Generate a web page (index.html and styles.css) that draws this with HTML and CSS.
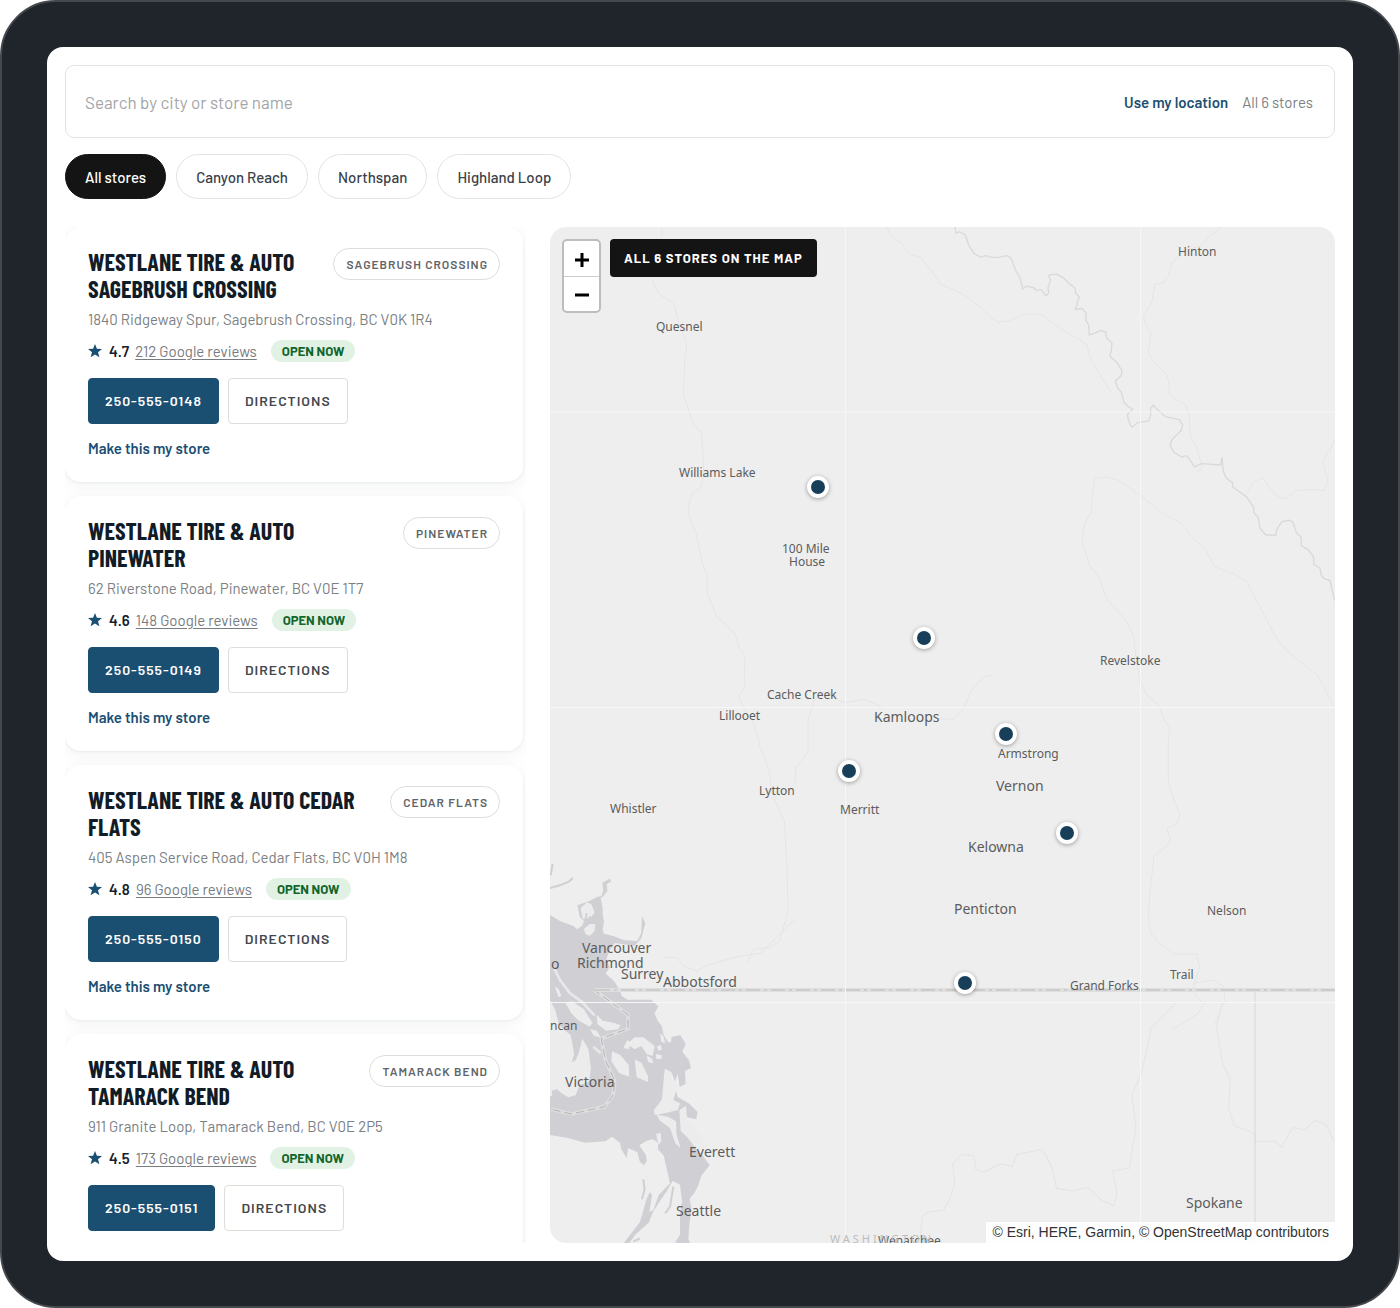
FILE: index.html
```html
<!DOCTYPE html>
<html lang="en">
<head>
<meta charset="utf-8">
<meta name="viewport" content="width=device-width, initial-scale=1">
<title>Westlane Tire &amp; Auto stores</title>
<link rel="stylesheet" href="styles.css">
</head>
<body>
<div class="device">
<main class="screen">
  <form class="search">
    <input class="search-input" type="search" aria-label="Search stores" placeholder="Search by city or store name">
    <button class="locate" type="button">Use my location</button>
    <span class="count">All 6 stores</span>
  </form>

  <div class="chips">
    <button class="chip chip-active" type="button">All stores</button>
    <button class="chip" type="button">Canyon Reach</button>
    <button class="chip" type="button">Northspan</button>
    <button class="chip" type="button">Highland Loop</button>
  </div>

  <div class="finder">
    <section class="list" aria-label="Stores">
      <article class="card">
        <header class="card-head">
          <h2 class="card-title">Westlane Tire &amp; Auto Sagebrush Crossing</h2>
          <span class="tag">Sagebrush Crossing</span>
        </header>
        <p class="address">1840 Ridgeway Spur, Sagebrush Crossing, BC V0K 1R4</p>
        <div class="rating">
          <svg class="star" viewBox="0 0 14 14" aria-hidden="true"><path d="M7 0l1.900 4.800 5.100.3-4 3.200 1.400 5L7 10.600l-4.400 2.700 1.400-5-4-3.200 5.100-.3z"/></svg>
          <strong class="score">4.7</strong>
          <a class="reviews" href="#">212 Google reviews</a>
          <span class="open">Open now</span>
        </div>
        <div class="actions">
          <a class="btn btn-call" href="tel:250-555-0148">250-555-0148</a>
          <a class="btn btn-line" href="#">Directions</a>
        </div>
        <button class="mine" type="button">Make this my store</button>
      </article>

      <article class="card">
        <header class="card-head">
          <h2 class="card-title">Westlane Tire &amp; Auto Pinewater</h2>
          <span class="tag">Pinewater</span>
        </header>
        <p class="address">62 Riverstone Road, Pinewater, BC V0E 1T7</p>
        <div class="rating">
          <svg class="star" viewBox="0 0 14 14" aria-hidden="true"><path d="M7 0l1.900 4.800 5.100.3-4 3.200 1.400 5L7 10.600l-4.400 2.700 1.400-5-4-3.200 5.100-.3z"/></svg>
          <strong class="score">4.6</strong>
          <a class="reviews" href="#">148 Google reviews</a>
          <span class="open">Open now</span>
        </div>
        <div class="actions">
          <a class="btn btn-call" href="tel:250-555-0149">250-555-0149</a>
          <a class="btn btn-line" href="#">Directions</a>
        </div>
        <button class="mine" type="button">Make this my store</button>
      </article>

      <article class="card">
        <header class="card-head">
          <h2 class="card-title">Westlane Tire &amp; Auto Cedar Flats</h2>
          <span class="tag">Cedar Flats</span>
        </header>
        <p class="address">405 Aspen Service Road, Cedar Flats, BC V0H 1M8</p>
        <div class="rating">
          <svg class="star" viewBox="0 0 14 14" aria-hidden="true"><path d="M7 0l1.900 4.800 5.100.3-4 3.200 1.400 5L7 10.600l-4.400 2.700 1.400-5-4-3.200 5.100-.3z"/></svg>
          <strong class="score">4.8</strong>
          <a class="reviews" href="#">96 Google reviews</a>
          <span class="open">Open now</span>
        </div>
        <div class="actions">
          <a class="btn btn-call" href="tel:250-555-0150">250-555-0150</a>
          <a class="btn btn-line" href="#">Directions</a>
        </div>
        <button class="mine" type="button">Make this my store</button>
      </article>

      <article class="card">
        <header class="card-head">
          <h2 class="card-title">Westlane Tire &amp; Auto Tamarack Bend</h2>
          <span class="tag">Tamarack Bend</span>
        </header>
        <p class="address">911 Granite Loop, Tamarack Bend, BC V0E 2P5</p>
        <div class="rating">
          <svg class="star" viewBox="0 0 14 14" aria-hidden="true"><path d="M7 0l1.900 4.800 5.100.3-4 3.200 1.400 5L7 10.600l-4.400 2.700 1.400-5-4-3.200 5.100-.3z"/></svg>
          <strong class="score">4.5</strong>
          <a class="reviews" href="#">173 Google reviews</a>
          <span class="open">Open now</span>
        </div>
        <div class="actions">
          <a class="btn btn-call" href="tel:250-555-0151">250-555-0151</a>
          <a class="btn btn-line" href="#">Directions</a>
        </div>
      </article>
    </section>

    <section class="map" aria-label="Store map">
      <svg class="basemap" viewBox="550 227 785 1016" preserveAspectRatio="xMidYMid slice">
        <!-- rivers and roads -->
        <g class="river">
          <g transform="translate(540 220) scale(.3333)">
            <path d="M366 20v30M337 180l10 25 15 22 30 15 12 15 8 35 10 35 15 30 3 25-5 30-3 70-2 45 10 25 12 35 12 30 20 20 5 60 2 70-8 35-20 12-15 30-2 45 12 25 10 25 10 45 10 50 14 30 0 55 10 25 20 50 15 10 18 18 20 20 12 40 18 26-2 70 4 20-20 30 15 40 28 40 15 50 4 20 14 35 16 50 8 60 22 50 14 30 3 50 5 80 3 130-5 30-20 70-30 20-50 6-15 40"/>
            <path d="M1040 20l12 26 30 22 30 35 30 10 30 35 30 45 34 14 40 20 50 38 30 30 20 12 30-4 45-20 54 0 40 32 40 25 55 32 10 40 40 70 25 35"/>
          </g>
          <g transform="translate(940 220) scale(.3333)">
            <path d="M845 22l-40 30-15 22-60 20-20 20-15 15-10 40-15 20-25 5-10 55-25 40 5 20 18 30-8 60 20 30 35 35 6 20 2 35 10 15 40 20 10 30 2 60 20 40 18 60-20 14"/>
            <path d="M920 820l20-32 28-16 20 30 25 28 25 6 30-24 50-4 35 4 10-30-15-60 25-38 10-20 22-30M465 775l35-4 35 10 70 48 60 50 60 32 30 40 40 35 30 55 60 22 35 20 30 60 30 55 25 50 30 40 50 40 50 40 45 90M465 775l-7 50-4 50-20 35-8 50 12 40 10 35 30 40 22 60 60 70 20 40 10 80 10 60 20 40 40 35 10 35 20 30-5 30 0 130 15 50 20 50-10 28-30 12 12 35-15 22-35 25-5 50-8 70-4 60 6 50 25 30 45 35h70l8 40-10 30-12 40 15 20 20 20-20 30-80 50"/>
            <path d="M0 1497h42l30-32 20-50 40-45 24-5M760 2290l60-10 30 20 5 40-30 70"/>
          </g>
          <path d="M814 700l10-8 20 11 20-4 20 9M814 700l-6 20 0 32-12 15-1 16"/>
          <path d="M665 957l12 1 8 9 12 4 11-6 28-8 25-4 20-20 14-14"/>
          <g transform="translate(780 1000) scale(.395)">
            <path d="M1000 10l-60 60-12 60-15 60-22 50 10 80-16 105-42 8 10 60-8 28-30-14-35-32-40 8-40-6-10-50-20-40-10-8-60 12-12 30-30-6-40 20-22-6-5-34-30-4-24 24 6 50-14 40-14 26-40 6-15 12-5 60-20 40-6 40"/>
            <path d="M1120 8l-15 60 15 90 20 45-4 70 14 45 50 20 4 20 50 0 16 15 28-50 30 6 24-24 30 10 22 45"/>
          </g>
        </g>
        <path class="divide" transform="translate(940 220) scale(.3333)" d="M44 20l4 20 10-5 18 10 10 30 16 25 20 12 14-5 20 5 20 0 24-5 12 6 8 20 8 20 12 20 8 34 10-8 22 4 10 8 14-2 14 18 8-8-2-16 8-22-6-14 10-4 16 0 20 12 16 16 18 14 0 14 12 12-6 18-6 20 20-4 12 14 0 22 8 14 2 30 14-4 20-10 16 6 2 18 16 14-2 22-4 18 22 20 14 24-2 14-18 16 8 22 10 12 8 30 14 14 12 6-16 18 8 30 6 6 20-14 30-4 6-18 0-20 8-10 8 10 30 26 40 8 10 16-4 16-28 28-6 16 12 22 24 14 14-4 12 16 12 18 22-10 56 4 4-22 4 40 8 20 20 16 0 12 40 28 22 30 2 20 12 12 6 34 18 20h30l2-16 16-24 22-4 10 4 12 34 14 14 0 24 20 12 16 20 2 24 18 12 4 22 10 10 16 4 14 60"/>

        <!-- coast; land and water are drawn at three times map scale -->
        <g transform="translate(540 860) scale(.3333)">
          <path class="water" d="M30 165l30 18 40 15 12 10 15-12 5-12-12-12-5-22-3-14 38-14 20-10 15-5 5-15-3-24 23-12 4 8-14 9 2 20-12 15-8 7 6 28 0 20 4 22-4 24 4 12 30 8 30 12 40 2 12-25 2-50 10 22-12 45-20 22-60-8-15 22-10 26 10 24-12 20 25 22 16 24 8 22 17 10h70l22 20-12 22 12 24 10 12 6 28 14 22 8 0 2-16 26-6 16 26-10 24 20 26 6 24-18 8 2 38-18 10-6-40-10 30 10 40 35 20 25 25-4 22-26-6-16-14-5 24 12 24 26 18 5 32 30 40 14 20-24 30-10 30-10 20-16 20 6 30-6 40-4 50 14 35 10 40h-35l-8-55-20-10 14-22 0-60 6-40-6-50-22-12-18 32-14 20-26 40-14 34-40 36-24 34-34 53h-8l30-60 50-65 20-70 10-20 6 10-8 50 12-6 16-44 34-36-14-62-4-20-18-20 0-20-16-10-18 4-22 14 20 30 2 18-8 12-12-10-8-30-28-12-4 30-16-26-4-20-24-18-20 14-62 4-50-14-60-10z"/>
          <path class="land" d="M30 420l16 30 12 46 34 30 8 40 5 40 12-30 10-40 18 30 8 60-6 40-28 8-12 32-22 6-20-12-14-12-16 4 2 14-7 4zM132 206l18-14 16 0-2 20-14 16-14-6zM122 145l18-18 14 6 10 24-14 20-22 0zM76 428l20-4 36 24 26 42-10 10-34-20-20-20zM150 508l20 4 12 20-20-4zM170 464l18 18 34 6 20 8-8 12-36 4-26-20zM44 380l12 6 8 22-8 4zM216 574l24 10 26 30 2 36-30-10-24-36zM262 552l22-20 26 0 34 26-6 30-18-6-16-24-20 10zM284 598l20 10 20 40 0 18-34-14zM320 586l16 10 4 14-16-4zM348 582l18 4-2 12-16-2zM374 626l20 10 18 44-12 40 20 10-6 20-34 8-36 8-2-16 24-32zM350 764l34 6 24 14 2 40 12 40-16-14-16-46-30-22zM418 750l20-12 4 40 50 64 10 20-30 10-30-40-20-20zM348 822l14-4 2 24-8 14zM262 540l12 8-8 20-16-4zM350 560l12-6 4 14-10 4zM360 520l10 8 6 22-12-4z"/>
          <path class="shore" d="M40 320l20 40 30 40 34 24 40 42M160 560l22 20"/>
          <path class="inlet" d="M30 84l30-8 28-12 10-10M38 12l-6 34M118 545l-6 25-14 35M140 160l-4 24 18-14M400 980l-10 60-14 20M310 958l4 30-8 30M300 1135l-20 10"/>
          <path class="lane" d="M160 388l104 76v42l-80 30 12 64 28 62-4 42-26 36-100 22-60-14"/>
          <path class="lane-dash" d="M160 388l104 76v42l-80 30 12 64 28 62-4 42-26 36-100 22-60-14"/>
        </g>
        <path class="border-halo" d="M596 990H1335"/>
        <path class="border" d="M596 990H1335"/>
        <path class="state" d="M1255 990V1243"/>
        <path class="seam" d="M845.500 227V1243M1140.500 227V1243M550 412H1335M550 707.500H1335M550 1002.500H1335"/>

        <g class="town">
          <text x="1178" y="256">Hinton</text>
          <text x="656" y="331">Quesnel</text>
          <text x="679" y="477">Williams Lake</text>
          <text x="782" y="553">100 Mile</text>
          <text x="789" y="566">House</text>
          <text x="1100" y="665">Revelstoke</text>
          <text x="767" y="699">Cache Creek</text>
          <text x="719" y="720">Lillooet</text>
          <text x="998" y="758">Armstrong</text>
          <text x="759" y="795">Lytton</text>
          <text x="610" y="813">Whistler</text>
          <text x="840" y="814">Merritt</text>
          <text x="1207" y="915">Nelson</text>
          <text x="1170" y="979">Trail</text>
          <text x="1070" y="990">Grand Forks</text>
          <text x="550" y="1030">ncan</text>
          <text x="878" y="1245">Wenatchee</text>
        </g>
        <g class="city">
          <text x="874" y="722">Kamloops</text>
          <text x="996" y="791">Vernon</text>
          <text x="968" y="852">Kelowna</text>
          <text x="954" y="914">Penticton</text>
          <text x="582" y="953">Vancouver</text>
          <text x="621" y="979">Surrey</text>
          <text x="577" y="968">Richmond</text>
          <text x="663" y="987">Abbotsford</text>
          <text x="551" y="969">o</text>
          <text x="565" y="1087">Victoria</text>
          <text x="689" y="1157">Everett</text>
          <text x="676" y="1216">Seattle</text>
          <text x="1186" y="1208">Spokane</text>
        </g>
        <text class="region" x="830" y="1243">WASHINGTON</text>
      </svg>

      <button class="pin" type="button" aria-label="Store 1" style="left:34.1%;top:25.6%"></button>
      <button class="pin" type="button" aria-label="Store 2" style="left:47.6%;top:40.5%"></button>
      <button class="pin" type="button" aria-label="Store 3" style="left:58.1%;top:49.9%"></button>
      <button class="pin" type="button" aria-label="Store 4" style="left:38.1%;top:53.5%"></button>
      <button class="pin" type="button" aria-label="Store 5" style="left:65.8%;top:59.6%"></button>
      <button class="pin" type="button" aria-label="Store 6" style="left:52.9%;top:74.4%"></button>

      <div class="map-top">
        <div class="zoom">
          <button class="zoom-btn" type="button" aria-label="Zoom in"><svg viewBox="0 0 16 16"><path d="M8 1v14M1 8h14"/></svg></button>
          <button class="zoom-btn" type="button" aria-label="Zoom out"><svg viewBox="0 0 16 16"><path d="M1 8h14"/></svg></button>
        </div>
        <div class="banner">All 6 stores on the map</div>
      </div>
      <div class="credit">© Esri, HERE, Garmin, © OpenStreetMap contributors</div>
    </section>
  </div>
</main>
</div>
</body>
</html>
```
FILE: styles.css
```css
* { box-sizing: border-box; }

body {
  margin: 0;
  background: #fff;
  color: #14202b;
  font-family: "Barlow", Roboto, "Liberation Sans", sans-serif;
  font-size: 15px;
}

button, input { font: inherit; color: inherit; }
button { cursor: pointer; }

.device {
  height: 100vh;
  padding: 45px;
  border: 2px solid #44484d;
  border-radius: 56px;
  background: #20242b;
}

.screen {
  display: flex;
  flex-direction: column;
  height: 100%;
  padding: 18px;
  border-radius: 16px;
  background: #fff;
}

/* search */
.search {
  display: flex;
  align-items: center;
  gap: 14px;
  padding: 0 21px 0 19px;
  border: 1px solid #e3e3e0;
  border-radius: 9px;
}
.search-input {
  flex: 1;
  min-width: 0;
  height: 71px;
  padding: 0;
  border: 0;
  outline: 0;
  background: none;
  font-size: 17px;
}
.search-input::placeholder { color: #a2a5a7; opacity: 1; }
.locate {
  padding: 0;
  border: 0;
  background: none;
  color: #1b4f72;
  font-weight: 600;
}
.count { color: #7b8083; }

/* region chips */
.chips { display: flex; flex-wrap: wrap; gap: 10px; margin: 16px 0 28px; }
.chip {
  height: 45px;
  padding: 0 19px;
  border: 1px solid #e3e3e0;
  border-radius: 23px;
  background: #fff;
  color: #3a4148;
  font-weight: 500;
}
.chip-active { border-color: #141414; background: #141414; color: #fff; }

.finder {
  flex: 1;
  display: grid;
  grid-template-columns: 37fr 63fr;
  gap: 24px;
  min-height: 0;
}

/* store cards */
.list {
  display: flex;
  flex-direction: column;
  gap: 14px;
  min-height: 0;
  padding-right: 3px;
  overflow: hidden;
}
.card {
  flex: none;
  padding: 21px 23px 23px;
  border-radius: 16px;
  background: #fff;
  box-shadow: 0 1px 3px rgba(20, 30, 40, .06), 0 4px 18px rgba(20, 30, 40, .05);
}
.card:last-child { padding-bottom: 58px; }
.card-head {
  display: flex;
  align-items: flex-start;
  justify-content: space-between;
  gap: 14px;
}
.card-title {
  margin: 0;
  color: #111c26;
  font-family: "Barlow Condensed", "Roboto Condensed", "Liberation Sans Narrow", Roboto, sans-serif;
  font-size: 24px;
  font-weight: 700;
  line-height: 27px;
  text-transform: uppercase;
}
.tag {
  flex: none;
  padding: 0 11px 0 12px;
  border: 1px solid #deded9;
  border-radius: 16px;
  color: #5f6468;
  font-size: 12px;
  font-weight: 600;
  letter-spacing: 1px;
  line-height: 30px;
  text-transform: uppercase;
}
.address {
  margin: 6px 0 10px;
  color: #7b8083;
  line-height: 22px;
}
.rating { display: flex; align-items: center; height: 22px; }
.star { width: 14px; height: 14px; margin-right: 7px; fill: #1b4f72; }
.score { margin-right: 6px; font-weight: 600; }
.reviews {
  margin-right: 14px;
  color: #777c80;
  text-underline-offset: 2px;
}
.open {
  padding: 0 11px;
  border-radius: 11px;
  background: #e1f2e5;
  color: #12652b;
  font-size: 13px;
  font-weight: 700;
  line-height: 22px;
  text-transform: uppercase;
}
.actions { display: flex; gap: 9px; margin-top: 16px; }
.btn {
  padding: 0 16px;
  border: 1px solid #deded9;
  border-radius: 4px;
  color: #43484d;
  font-size: 14px;
  font-weight: 600;
  letter-spacing: 1px;
  line-height: 44px;
  text-decoration: none;
  text-transform: uppercase;
}
.btn-call { border-color: #1b4f72; background: #1b4f72; color: #fff; }
.mine {
  display: block;
  margin-top: 13px;
  padding: 0;
  border: 0;
  background: none;
  color: #1b4f72;
  font-weight: 600;
  line-height: 22px;
}

/* map */
.map {
  position: relative;
  overflow: hidden;
  border-radius: 16px;
  background: #eee;
}
.basemap { position: absolute; inset: 0; width: 100%; height: 100%; }
.basemap path { fill: none; }
.river { stroke: #e5e5e6; stroke-width: 3; }
.river > path { stroke-width: 1; }
.divide { stroke: #d9d9da; stroke-width: 4; }
.basemap .water { fill: #cfcfd4; }
.basemap .land { fill: #ececed; }
.shore { stroke: #e8e8ea; stroke-width: 8; }
.inlet { stroke: #cfcfd4; stroke-width: 6; }
.lane { stroke: #dedede; stroke-width: 11; }
.lane-dash { stroke: #b4b4b8; stroke-width: 3; stroke-dasharray: 24 12; }
.border-halo { stroke: #dfdfdf; stroke-width: 4; }
.border { stroke: #b9b9b9; stroke-width: 1; stroke-dasharray: 14 4 3 4; }
.state { stroke: #d6d6d7; stroke-width: 1; }
.seam { stroke: #f7f7f7; stroke-width: 1; }
.town, .city {
  fill: #5c5c5c;
  font-family: "Noto Sans", "Open Sans", sans-serif;
  font-size: 12px;
}
.city { font-size: 14px; }
.region { fill: #bdbdbd; font-family: "Noto Sans", sans-serif; font-size: 11px; letter-spacing: 3px; }

.pin {
  position: absolute;
  width: 22px;
  height: 22px;
  padding: 0;
  border: 4px solid #fff;
  border-radius: 50%;
  background: #173f5a;
  box-shadow: 0 1px 4px rgba(0, 0, 0, .35);
  transform: translate(-50%, -50%);
}

.map-top {
  position: relative;
  display: flex;
  align-items: flex-start;
  gap: 9px;
  padding: 12px;
}
.zoom {
  display: flex;
  flex-direction: column;
  border: 2px solid #bdbdbd;
  border-radius: 5px;
  background: #fff;
}
.zoom-btn {
  display: grid;
  place-items: center;
  width: 35px;
  height: 35px;
  padding: 2px 0 0;
  border: 0;
  background: none;
}
.zoom-btn + .zoom-btn { border-top: 1px solid #ccc; }
.zoom-btn svg { width: 16px; height: 16px; stroke: #000; stroke-width: 3; }
.banner {
  padding: 0 14px;
  border-radius: 4px;
  background: #141414;
  color: #fff;
  font-size: 13px;
  font-weight: 700;
  letter-spacing: 1px;
  line-height: 38px;
  text-transform: uppercase;
}
.credit {
  position: absolute;
  right: 0;
  bottom: 0;
  padding: 0 6px;
  background: rgba(255, 255, 255, .9);
  color: #333;
  font-family: "Liberation Sans", Arial, sans-serif;
  font-size: 14px;
  line-height: 21px;
}
```
